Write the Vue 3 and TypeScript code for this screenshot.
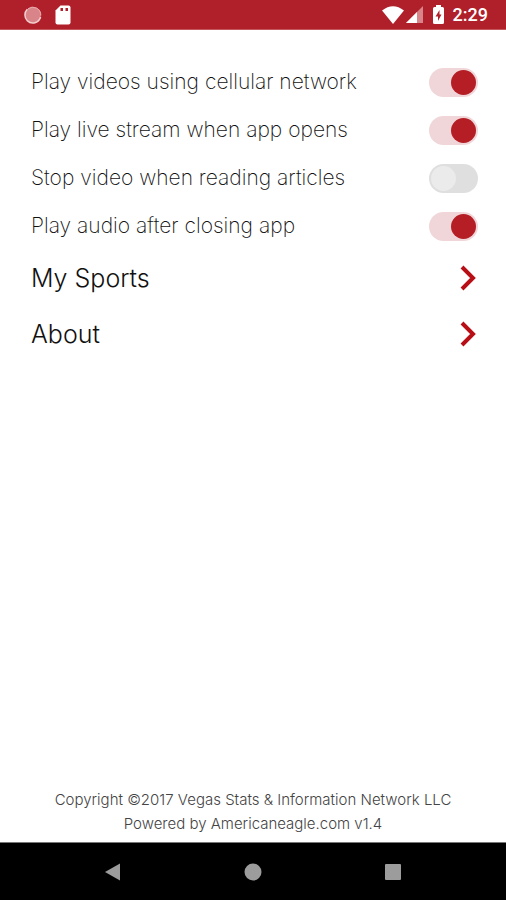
<script setup lang="ts">
import { ref } from 'vue'

interface Setting {
  id: string
  label: string
  enabled: boolean
}

const settings = ref<Setting[]>([
  { id: 'cellular', label: 'Play videos using cellular network', enabled: true },
  { id: 'live', label: 'Play live stream when app opens', enabled: true },
  { id: 'articles', label: 'Stop video when reading articles', enabled: false },
  { id: 'audio', label: 'Play audio after closing app', enabled: true },
])

const links: { label: string; href: string }[] = [
  { label: 'My Sports', href: '#sports' },
  { label: 'About', href: '#about' },
]
</script>

<template>
  <div class="screen">
    <header class="status">
      <div class="status-group left">
        <svg class="spinner" viewBox="0 0 18 18" aria-hidden="true">
          <circle cx="9" cy="9" r="8" fill="#d98488" />
          <path d="M4 2.8A8 8 0 0 1 16.8 9.5" fill="none" stroke="#e9b1b3" stroke-width="1" />
          <path d="M3.3 3.3A8 8 0 0 0 3.3 14.7A8 8 0 0 0 16.6 11" fill="none" stroke="#f3cfd0" stroke-width="1.5" />
        </svg>
        <svg class="card" viewBox="0 0 16 20" aria-hidden="true">
          <path d="M5.5 0.5H13.5Q15.5 0.5 15.5 2.5V17.5Q15.5 19.5 13.5 19.5H2.5Q0.5 19.5 0.5 17.5V5.5Z" fill="#fff" />
          <path d="M5.5 3H8V6H5.5ZM10.5 3H13V6H10.5Z" fill="#b0202a" />
        </svg>
      </div>
      <div class="status-group right">
        <svg class="wifi" viewBox="0 0 22 18" aria-hidden="true">
          <path d="M0 4.5Q11 -4 22 4.5L11 18Z" fill="#fff" />
        </svg>
        <svg class="signal" viewBox="0 0 17 17" aria-hidden="true">
          <path d="M17 0V17H0Z" fill="#d98488" />
          <path d="M11 6V17H0Z" fill="#fff" />
        </svg>
        <svg class="battery" viewBox="0 0 11 19" aria-hidden="true">
          <path d="M3 0H8V2H9.5Q11 2 11 3.5V17.5Q11 19 9.5 19H1.5Q0 19 0 17.5V3.5Q0 2 1.5 2H3Z" fill="#fff" />
          <path d="M6.5 5L2.5 11.5H5V16L8.5 9.5H6.5Z" fill="#b0202a" />
        </svg>
        <span class="time">2:29</span>
      </div>
    </header>

    <main class="content">
      <div v-for="item in settings" :key="item.id" class="setting">
        <label :for="item.id">{{ item.label }}</label>
        <input :id="item.id" v-model="item.enabled" class="toggle" type="checkbox" role="switch" />
      </div>
      <nav>
        <a v-for="link in links" :key="link.href" class="link" :href="link.href">
          <span>{{ link.label }}</span>
          <svg class="chevron" viewBox="0 0 16 26" aria-hidden="true">
            <path d="M2 2L13 13L2 24" fill="none" stroke="#b80f16" stroke-width="4" />
          </svg>
        </a>
      </nav>
    </main>

    <footer class="legal">
      <p>Copyright ©2017 Vegas Stats &amp; Information Network LLC</p>
      <p>Powered by Americaneagle.com v1.4</p>
    </footer>

    <div class="system">
      <button type="button" aria-label="Back">
        <svg viewBox="0 0 18 18" aria-hidden="true"><path d="M1 9L16 0.5V17.5Z" fill="#9c9c9c" /></svg>
      </button>
      <button type="button" aria-label="Home">
        <svg viewBox="0 0 18 18" aria-hidden="true"><circle cx="9" cy="9" r="8.5" fill="#9c9c9c" /></svg>
      </button>
      <button type="button" aria-label="Recent apps">
        <svg viewBox="0 0 18 18" aria-hidden="true"><rect x="1" y="1" width="16" height="16" rx="1" fill="#9c9c9c" /></svg>
      </button>
    </div>
  </div>
</template>

<style>
body {
  margin: 0;
  background: #fff;
}
</style>

<style scoped>
.screen {
  display: flex;
  flex-direction: column;
  min-height: 100vh;
  background: #fff;
  color: #111;
  font-family: Inter, 'Liberation Sans', sans-serif;
  font-weight: 300;
}

.status {
  display: flex;
  align-items: center;
  justify-content: space-between;
  box-sizing: border-box;
  height: 30px;
  padding: 0 18px 0 24px;
  background: #b0202a;
  border-bottom: 1px solid #c4565d;
}

.status-group {
  display: flex;
  align-items: center;
}

.left {
  gap: 13px;
}

.spinner {
  width: 18px;
  height: 18px;
}

.card {
  width: 16px;
  height: 20px;
}

.wifi {
  width: 22px;
  height: 18px;
  margin-right: 2px;
}

.signal {
  width: 17px;
  height: 17px;
  margin-right: 10px;
}

.battery {
  width: 11px;
  height: 19px;
  margin-right: 9px;
}

.time {
  color: #fff;
  font-family: Roboto, sans-serif;
  font-size: 18px;
  font-weight: 500;
  line-height: 30px;
}

.content {
  flex: 1;
  padding: 28px 28px 0 31px;
}

.setting {
  display: flex;
  align-items: center;
  justify-content: space-between;
  height: 48px;
  font-size: 21px;
  font-weight: 200;
}

.setting label {
  line-height: 28px;
}

.toggle {
  display: flex;
  flex: none;
  align-items: center;
  box-sizing: border-box;
  width: 49px;
  height: 29px;
  margin: 0;
  padding: 0 2px;
  appearance: none;
  background: #dfdfdf;
  border-radius: 15px;
  cursor: pointer;
}

.toggle::before {
  width: 25px;
  height: 25px;
  background: #ebebeb;
  border-radius: 50%;
  content: '';
}

.toggle:checked {
  justify-content: flex-end;
  background: #f0d6d9;
}

.toggle:checked::before {
  background: #b41e24;
}

.link {
  display: flex;
  align-items: center;
  justify-content: space-between;
  height: 56px;
  padding-right: 2px;
  color: inherit;
  font-size: 25px;
  text-decoration: none;
}

.chevron {
  width: 16px;
  height: 26px;
}

.legal {
  padding: 0 16px 6px;
  color: #444;
  font-size: 15px;
  line-height: 24px;
  text-align: center;
}

.legal p {
  margin: 0;
}

.system {
  display: flex;
  align-items: center;
  justify-content: center;
  gap: 100px;
  box-sizing: border-box;
  height: 58px;
  background: #000;
  border-top: 1px solid #777;
}

.system button {
  display: flex;
  align-items: center;
  justify-content: center;
  width: 40px;
  height: 40px;
  padding: 0;
  background: none;
  border: 0;
}

.system svg {
  width: 18px;
  height: 18px;
}
</style>
